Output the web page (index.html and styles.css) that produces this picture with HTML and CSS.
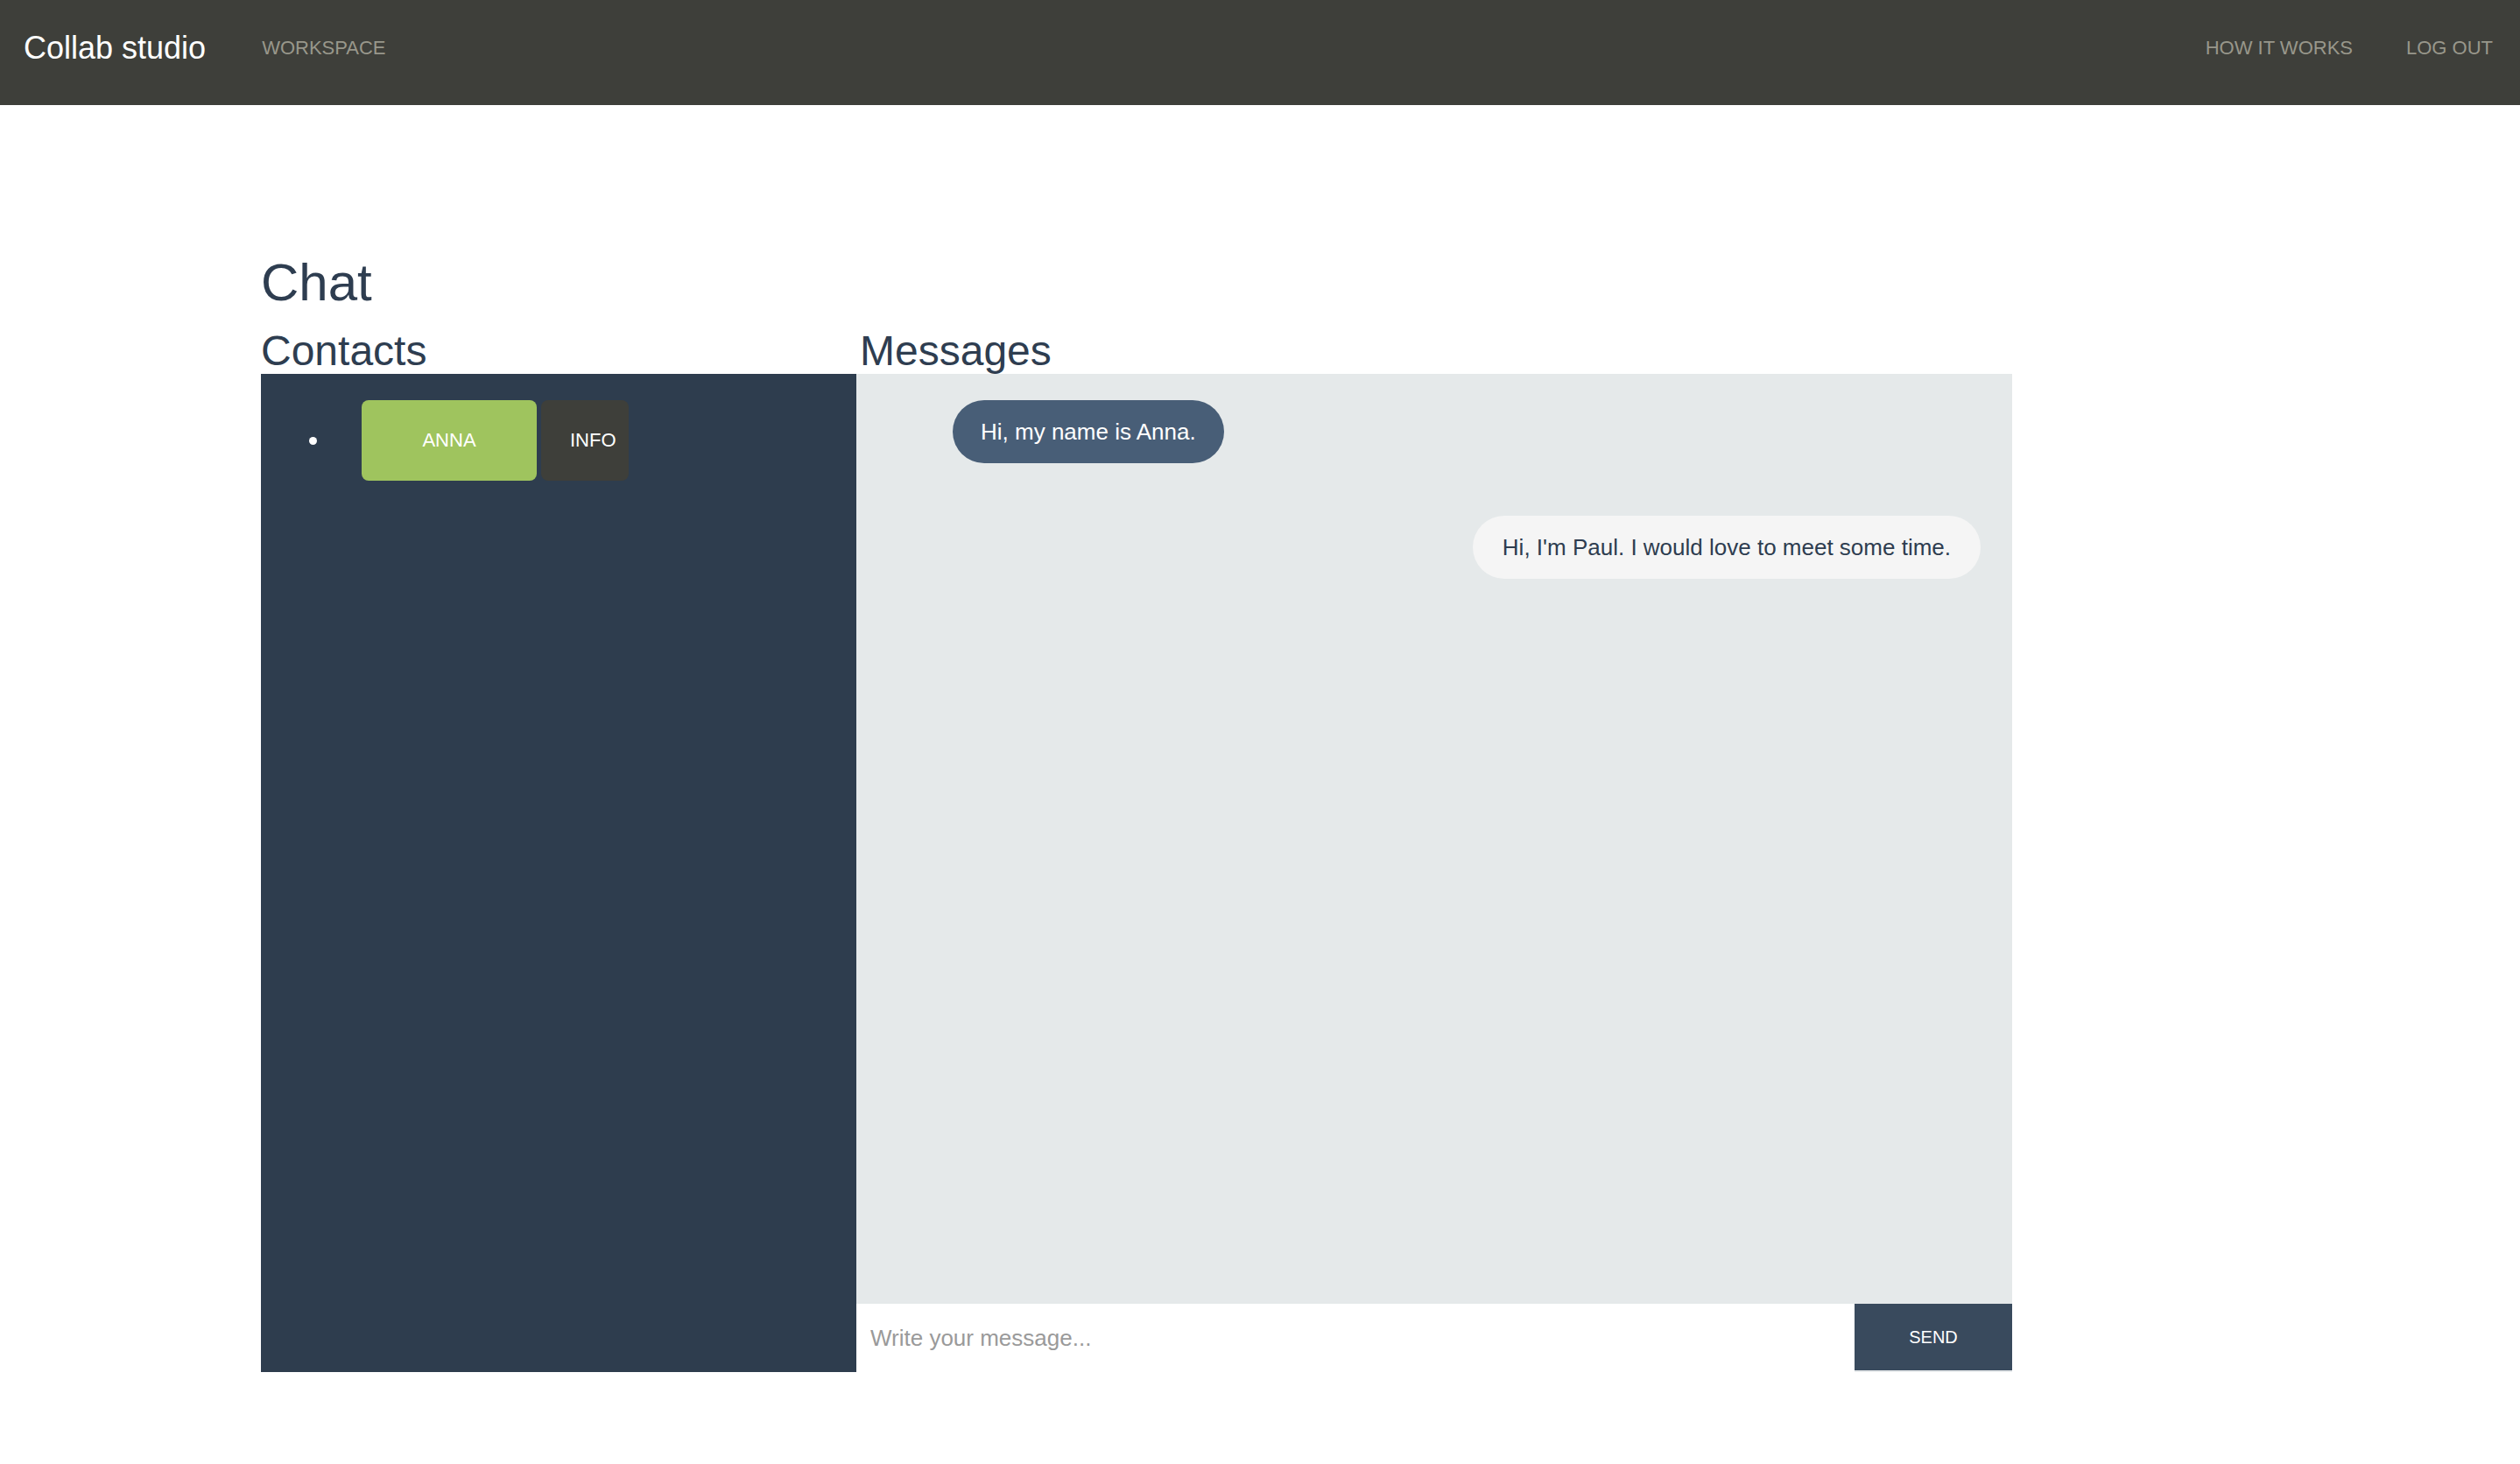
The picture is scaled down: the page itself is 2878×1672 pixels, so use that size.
FILE: index.html
```html
<!DOCTYPE html>
<html lang="en">
<head>
<meta charset="utf-8">
<title>Collab studio – Chat</title>
<link rel="stylesheet" href="styles.css">
</head>
<body>
<nav class="navbar">
  <a class="brand" href="#">Collab studio</a>
  <a class="nav-link workspace" href="#">Workspace</a>
  <div class="nav-right">
    <a class="nav-link" href="#">How it works</a>
    <a class="nav-link" href="#">Log out</a>
  </div>
</nav>
<main class="container">
  <h2 class="page-title">Chat</h2>
  <div class="chat-grid">
    <section class="contacts-col">
      <h3 class="col-title">Contacts</h3>
      <div class="contacts-panel">
        <ul class="contact-list">
          <li class="contact-item">
            <span class="bullet"></span>
            <button class="btn-contact">ANNA</button>
            <button class="btn-info">INFO</button>
          </li>
        </ul>
      </div>
    </section>
    <section class="messages-col">
      <h3 class="col-title col-title-messages">Messages</h3>
      <div class="messages-panel">
        <div class="message-list">
          <div class="bubble bubble-them">Hi, my name is Anna.</div>
          <div class="bubble bubble-me">Hi, I'm Paul. I would love to meet some time.</div>
        </div>
      </div>
      <form class="composer">
        <input class="composer-input" type="text" placeholder="Write your message...">
        <button class="btn-send" type="button">SEND</button>
      </form>
    </section>
  </div>
</main>
</body>
</html>
```
FILE: styles.css
```css
* { box-sizing: border-box; }

body {
  margin: 0;
  font-family: "Liberation Sans", Arial, Helvetica, sans-serif;
  color: #2e3d50;
  background: #ffffff;
}

.navbar {
  height: 120px;
  background: #3e3f3a;
  display: flex;
  align-items: center;
  padding: 0 31px 11px 27px;
}

.brand {
  font-size: 36px;
  color: #ffffff;
  text-decoration: none;
  line-height: 40px;
}

.nav-link {
  font-size: 22px;
  color: #98978b;
  text-decoration: none;
  text-transform: uppercase;
  line-height: 26px;
}

.workspace { margin-left: 64px; }

.nav-right {
  margin-left: auto;
  display: flex;
  gap: 61px;
}

.container {
  margin-left: 298px;
  width: 2000px;
  padding-top: 170px;
}

.page-title {
  margin: 0 0 18px;
  font-size: 60px;
  line-height: 66px;
  font-weight: normal;
  color: #2e3d50;
}

.chat-grid {
  display: grid;
  grid-template-columns: 680px 1320px;
}

.col-title {
  margin: 0;
  font-size: 48px;
  line-height: 53px;
  font-weight: normal;
  color: #2e3d50;
}

.col-title-messages { padding-left: 4px; }

.contacts-panel {
  height: 1140px;
  background: #2e3d4e;
  padding-top: 30px;
}

.contact-list {
  list-style: none;
  margin: 0;
  padding: 0;
}

.contact-item {
  display: flex;
  align-items: center;
}

.bullet {
  width: 9px;
  height: 9px;
  border-radius: 50%;
  background: #ffffff;
  margin-left: 55px;
  margin-right: 51px;
}

.btn-contact,
.btn-info {
  height: 92px;
  border: 0;
  border-radius: 8px;
  font-family: inherit;
  font-size: 22px;
  color: #ffffff;
  padding: 0;
  cursor: pointer;
}

.btn-contact {
  width: 200px;
  background: #9fc45e;
  text-align: center;
}

.btn-info {
  width: 100px;
  margin-left: 5px;
  background: #3e3f3a;
  text-align: left;
  padding-left: 33px;
}

.messages-panel {
  height: 1062px;
  background: #e5e9ea;
  padding-top: 30px;
}

.message-list {
  display: flex;
  flex-direction: column;
  gap: 60px;
}

.bubble {
  height: 72px;
  border-radius: 36px;
  padding: 0 32px;
  font-size: 26px;
  line-height: 72px;
  white-space: nowrap;
}

.bubble-them {
  align-self: flex-start;
  margin-left: 110px;
  background: #485e77;
  color: #ffffff;
}

.bubble-me {
  align-self: flex-end;
  margin-right: 36px;
  padding: 0 34px;
  background: #f5f5f5;
  color: #2e3d50;
}

.composer {
  display: flex;
  height: 78px;
  margin: 0;
  background: #ffffff;
}

.composer-input {
  flex: 1;
  height: 78px;
  border: 0;
  outline: none;
  padding: 0 16px;
  font-family: inherit;
  font-size: 26px;
  color: #2e3d50;
  background: #ffffff;
}

.composer-input::placeholder { color: #9a9a9a; }

.btn-send {
  width: 180px;
  height: 78px;
  border: 0;
  border-bottom: 2px solid #e6e9eb;
  background: #394a5d;
  color: #ffffff;
  font-family: inherit;
  font-size: 20px;
  padding: 0;
  cursor: pointer;
}
```
